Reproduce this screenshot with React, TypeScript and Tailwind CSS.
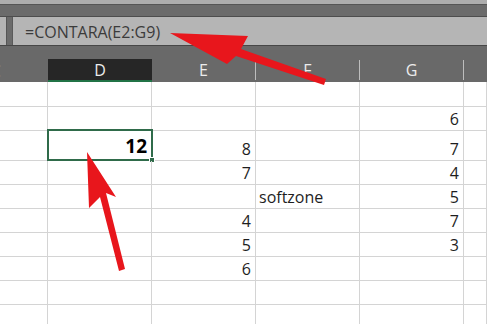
import React from "react";

const font = { fontFamily: '"Open Sans", "Noto Sans", sans-serif' };

type Row = { h: string; e?: string; f?: string; g?: string; d?: boolean };

const rows: Row[] = [
  { h: "h-[25px]" },
  { h: "h-[24px]", g: "6" },
  { h: "h-[30px]", e: "8", g: "7", d: true },
  { h: "h-[24px]", e: "7", g: "4" },
  { h: "h-[24px]", f: "softzone", g: "5" },
  { h: "h-[24px]", e: "4", g: "7" },
  { h: "h-[24px]", e: "5", g: "3" },
  { h: "h-[24px]", e: "6" },
  { h: "h-[24px]" },
  { h: "h-[24px]" },
];

const cell = "border-r border-b border-[#d4d4d4] flex items-end pb-[1px] text-[16px] leading-[20px] text-[#1e1e1e] overflow-hidden whitespace-nowrap";

export default function App() {
  return (
    <div className="relative w-[487px] h-[324px] overflow-hidden bg-white" style={font}>
      {/* top strip */}
      <div className="h-[5px] bg-[#adadad] border-b border-[#555]" />
      <div className="h-[12px] bg-[#6b6b6b] border-b border-[#4d4d4d]" />
      {/* formula bar */}
      <div className="h-[29px] flex bg-[#6b6b6b] border-b border-[#474747]">
        <div className="w-[7px] bg-[#b4b4b4] border-r border-[#555]" />
        <div className="w-[5px]" />
        <div className="flex-1 bg-[#b5b5b5] border-l border-[#5a5a5a] flex items-center pl-[12px]">
          <span className="text-[16px] leading-[20px] text-[#3b3b3b] mt-[1px]">=CONTARA(E2:G9)</span>
        </div>
      </div>
      {/* dark band */}
      <div className="h-[13px] bg-[#696969]" />
      {/* column headers */}
      <div className="grid grid-cols-[48px_104px_104px_104px_104px_1fr] h-[23px] bg-[#696969] text-[16px] leading-[20px] text-[#ececec]">
        <div className="relative overflow-hidden">
          <span className="absolute left-[-9px] top-[2px] text-[#8a8a8a]">C</span>
        </div>
        <div className="bg-[#262626] border-b-2 border-[#217346] flex items-center justify-center">D</div>
        <div className="border-r border-[#bdbdbd] mt-[1px] mb-[2px] flex items-center justify-center">E</div>
        <div className="border-r border-[#bdbdbd] mt-[1px] mb-[2px] flex items-center justify-center">F</div>
        <div className="border-r border-[#bdbdbd] mt-[1px] mb-[2px] flex items-center justify-center">G</div>
        <div />
      </div>
      {/* grid */}
      {rows.map((r, i) => (
        <div key={i} className={`grid grid-cols-[48px_104px_104px_104px_104px_1fr] ${r.h}`}>
          <div className={cell} />
          <div className={`${cell} relative justify-end pr-[4px] overflow-visible`}>
            {r.d && (
              <>
                <span className="text-[19px] font-bold leading-[22px] text-black mb-[2px]">12</span>
                <div className="absolute left-[-1px] top-[-2px] right-[-2px] bottom-[-1px] border-2 border-[#2f6b4a]" />
                <div className="absolute right-[-4px] bottom-[-3px] w-[6px] h-[6px] bg-[#2f6b4a] border border-white" />
              </>
            )}
          </div>
          <div className={`${cell} justify-end pr-[4px]`}>{r.e}</div>
          <div className={`${cell} pl-[3px]`}>{r.f}</div>
          <div className={`${cell} justify-end pr-[4px]`}>{r.g}</div>
          <div className={cell} />
        </div>
      ))}
      {/* arrows */}
      <svg className="absolute left-0 top-0 pointer-events-none" width="487" height="324" viewBox="0 0 487 324">
        <polygon
          fill="#e8161c"
          points="170,33 248,36 241,49 326,79 324,85 236,56 227,64"
        />
        <polygon
          fill="#e8161c"
          points="87,152 116,197 106,193 125,269 119,271 100,197 89,208"
        />
      </svg>
    </div>
  );
}
